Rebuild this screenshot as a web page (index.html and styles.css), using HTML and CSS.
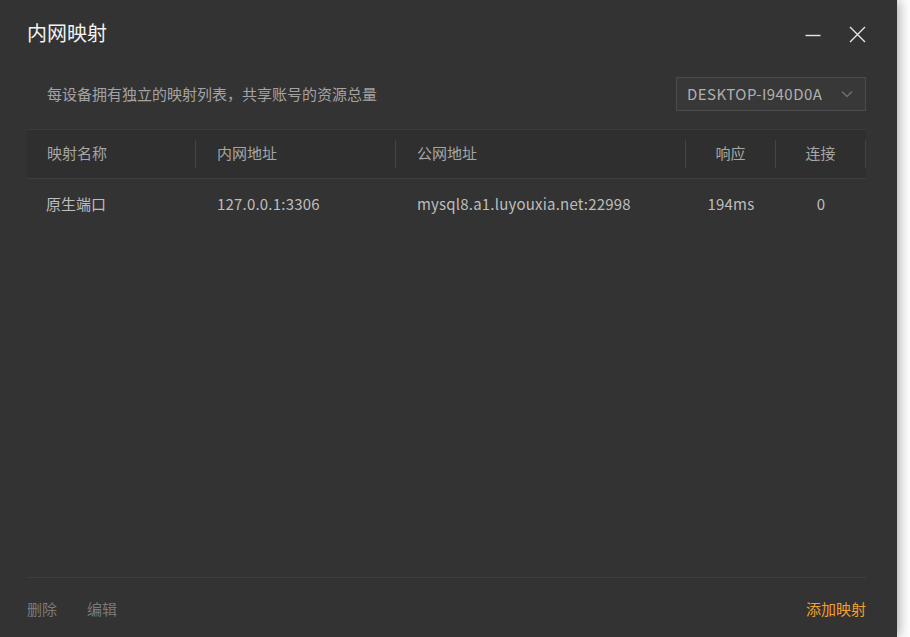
FILE: index.html
```html
<!DOCTYPE html>
<html lang="zh-CN">
<head>
<meta charset="utf-8">
<title>内网映射</title>
<link rel="stylesheet" href="styles.css">
</head>
<body>
<div class="window">
  <div class="titlebar">
    <div class="title">内网映射</div>
    <div class="controls">
      <svg class="ctl min" width="16" height="16" viewBox="0 0 16 16"><path d="M0.5 8.5H15.5" stroke="#e6e6e6" stroke-width="1.4"/></svg>
      <svg class="ctl close" width="17" height="17" viewBox="0 0 17 17"><path d="M1 1L16 16M16 1L1 16" stroke="#e6e6e6" stroke-width="1.4"/></svg>
    </div>
  </div>
  <div class="toolbar">
    <div class="hint">每设备拥有独立的映射列表，共享账号的资源总量</div>
    <div class="select">
      <span class="select-text">DESKTOP-I940D0A</span>
      <svg class="chev" width="12" height="8" viewBox="0 0 12 8"><path d="M1 1.5L6 6.5L11 1.5" fill="none" stroke="#6e6e6e" stroke-width="1.5"/></svg>
    </div>
  </div>
  <div class="table">
    <div class="thead">
      <div class="th">映射名称</div>
      <div class="th">内网地址</div>
      <div class="th">公网地址</div>
      <div class="th center">响应</div>
      <div class="th center">连接</div>
    </div>
    <div class="tr">
      <div class="td">原生端口</div>
      <div class="td latin">127.0.0.1:3306</div>
      <div class="td latin">mysql8.a1.luyouxia.net:22998</div>
      <div class="td latin center">194ms</div>
      <div class="td latin center">0</div>
    </div>
  </div>
  <div class="footer">
    <div class="actions">
      <span class="link muted">删除</span>
      <span class="link muted">编辑</span>
    </div>
    <span class="link accent">添加映射</span>
  </div>
</div>
</body>
</html>
```

FILE: styles.css
```css
* { box-sizing: border-box; }
html, body {
  margin: 0;
  padding: 0;
  background: #ffffff;
  width: 910px;
  height: 637px;
  overflow: hidden;
}
body {
  font-family: "Noto Sans CJK SC", "Noto Sans", sans-serif;
}
.window {
  width: 897px;
  height: 637px;
  background: #333333;
  display: flex;
  flex-direction: column;
  box-shadow: 2px 0 12px rgba(0, 0, 0, 0.35);
}
.titlebar {
  height: 68px;
  display: flex;
  align-items: center;
  justify-content: space-between;
  padding: 0 31px 0 27px;
}
.title {
  font-size: 20px;
  color: #f2f2f2;
  line-height: 1;
  padding-bottom: 2px;
}
.controls {
  display: flex;
  align-items: center;
  gap: 28px;
}
.ctl { display: block; }
.min { margin-top: 1px; }
.toolbar {
  margin: 9px 31px 18px 27px;
  height: 34px;
  display: flex;
  align-items: center;
  justify-content: space-between;
}
.hint {
  padding-left: 20px;
  padding-bottom: 2px;
  font-size: 15px;
  color: #a3a3a3;
}
.select {
  width: 190px;
  height: 34px;
  border: 1px solid #4b4b4b;
  background: #383838;
  display: flex;
  align-items: center;
  justify-content: space-between;
  padding: 0 12px 2px 10px;
}
.select-text {
  font-size: 15px;
  color: #b0b0b0;
  letter-spacing: 0.45px;
}
.chev { margin-top: 2px; }
.table {
  margin: 0 31px 0 27px;
  flex: 1;
  border-top: 1px solid #3c3c3c;
}
.thead, .tr {
  display: grid;
  grid-template-columns: 169px 200px 290px 90px 90px;
}
.thead {
  background: #2f2f2f;
  padding: 10px 0;
  border-bottom: 1px solid #3d3d3d;
}
.th {
  height: 28px;
  border-right: 1px solid #444444;
  display: flex;
  align-items: center;
  padding-left: 20px;
  padding-bottom: 3px;
  font-size: 15px;
  color: #a6a6a6;
}
.tr { height: 52px; }
.td {
  display: flex;
  align-items: center;
  padding-left: 20px;
  padding-bottom: 4px;
  font-size: 15px;
  color: #bdbdbd;
}
.latin { letter-spacing: 0.2px; }
.tr .td:first-child { padding-left: 19px; }
.thead .th:nth-child(n+2) { padding-left: 21px; }
.tr .td:nth-child(n+2) { padding-left: 21px; }
.center { justify-content: center; padding-left: 0 !important; }
.footer {
  margin: 0 31px 0 27px;
  height: 60px;
  border-top: 1px solid #3e3e3e;
  display: flex;
  align-items: center;
  justify-content: space-between;
  padding-top: 1px;
}
.actions {
  display: flex;
  gap: 30px;
}
.link {
  font-size: 15px;
}
.muted { color: #7a7a7a; }
.accent { color: #f0a02c; }
```
